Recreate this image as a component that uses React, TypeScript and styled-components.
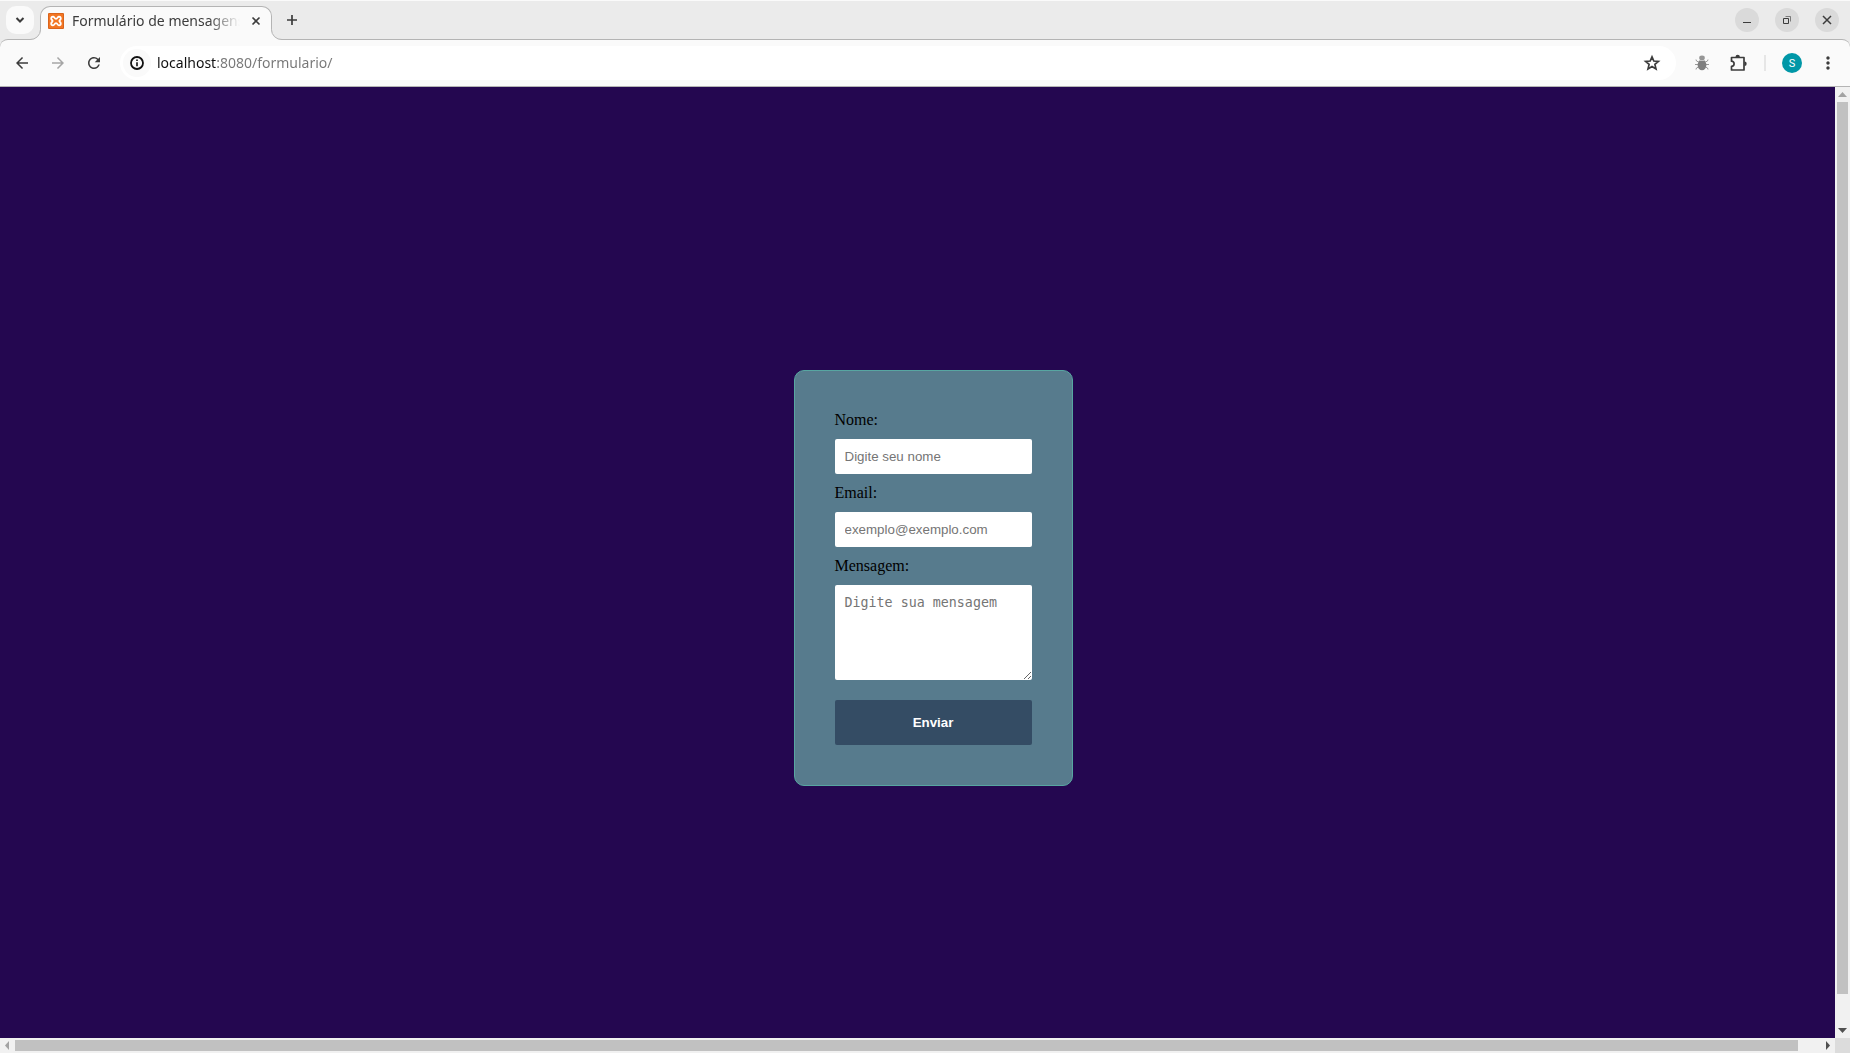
import React from "react";
import styled, { createGlobalStyle } from "styled-components";
import { MdArrowBack, MdArrowForward, MdRefresh, MdMoreVert } from "react-icons/md";

const GlobalStyle = createGlobalStyle`
  * { box-sizing: border-box; }
  body { margin: 0; overflow: hidden; }
`;

const Window = styled.div`
  display: flex;
  flex-direction: column;
  height: 100vh;
  background: #ebebeb;
  font-family: "Noto Sans", sans-serif;
`;

const TabStrip = styled.header`
  display: flex;
  align-items: center;
  height: 39px;
  flex: none;
  padding: 0 11px 0 6px;
  border-top: 1px solid #fafafa;
`;

const ChromeButton = styled.button<{ $size: number; $fill?: string; $radius?: string; $color?: string }>`
  display: flex;
  align-items: center;
  justify-content: center;
  flex: none;
  width: ${(p) => p.$size}px;
  height: ${(p) => p.$size}px;
  padding: 0;
  border: 0;
  border-radius: ${(p) => p.$radius ?? "50%"};
  background: ${(p) => p.$fill ?? "transparent"};
  color: ${(p) => p.$color ?? "#3c3c3c"};
`;

const Tab = styled.div`
  position: relative;
  z-index: 1;
  display: flex;
  align-items: center;
  align-self: flex-end;
  width: 232px;
  height: 34px;
  margin: 0 10px -1px 6px;
  padding: 0 7px 6px;
  border: 1px solid #b4b4b4;
  border-bottom: 0;
  border-radius: 10px 10px 0 0;
  background: #fafafa;
`;

const TabFoot = styled.svg<{ $side: "left" | "right" }>`
  position: absolute;
  bottom: 0;
  ${(p) => p.$side}: -11px;
`;

const TabTitle = styled.span`
  flex: 1;
  margin: 0 8px;
  overflow: hidden;
  white-space: nowrap;
  font-size: 14px;
  line-height: 20px;
  color: #3c3c3c;
  mask-image: linear-gradient(to right, #000 calc(100% - 32px), transparent);
`;

const WindowControls = styled.div`
  display: flex;
  gap: 16px;
  margin-left: auto;
`;

const Toolbar = styled.nav`
  display: flex;
  align-items: center;
  flex: none;
  height: 48px;
  padding: 0 8px;
  border: 1px solid #b4b4b4;
  border-width: 1px 0;
  border-radius: 8px 8px 0 0;
  background: #fafafa;
`;

const NavButtons = styled.div`
  display: flex;
  gap: 8px;
`;

const AddressBar = styled.div`
  display: flex;
  align-items: center;
  flex: 1;
  height: 34px;
  margin: 0 12px;
  padding: 0 10px 0 3px;
  border-radius: 17px;
  background: #fff;
`;

const Address = styled.input`
  flex: 1;
  min-width: 0;
  margin-left: 6px;
  padding: 0;
  border: 0;
  outline: 0;
  font-family: "Noto Sans", sans-serif;
  font-size: 14px;
  line-height: 20px;
  color: transparent;
  background: linear-gradient(to right, #101010 59px, #767676 59px);
  background-clip: text;
`;

const Extensions = styled.div`
  display: flex;
  align-items: center;
  gap: 8px;
`;

const Divider = styled.span`
  width: 2px;
  height: 16px;
  margin: 0 4px;
  background: #e6e6e6;
`;

const Avatar = styled.span`
  display: flex;
  align-items: center;
  justify-content: center;
  width: 20px;
  height: 20px;
  border-radius: 50%;
  background: #0097a7;
  color: #fff;
  font-family: Roboto, sans-serif;
  font-size: 11px;
`;

const Browser = styled.div`
  display: grid;
  grid-template-columns: minmax(0, 1fr) 15px;
  grid-template-rows: minmax(0, 1fr) 15px;
  flex: 1;
  min-height: 0;
  background: #dcdcdc;
`;

const Viewport = styled.div`
  overflow: hidden;
  background: #240750;
`;

const Body = styled.main`
  display: flex;
  align-items: center;
  justify-content: center;
  width: 100vw;
  height: calc(100vh - 87px);
  margin: 8px;
  font-family: "Liberation Serif", serif;
`;

const Form = styled.form`
  display: flex;
  flex-direction: column;
  padding: 40px;
  border: 1px solid #57a6a1;
  border-radius: 10px;
  background: #577b8d;
`;

const Label = styled.label`
  margin-bottom: 10px;
  font-size: 16px;
  line-height: 18px;
  color: #000;
`;

const Field = styled.input`
  width: 197px;
  margin: 0 0 10px;
  padding: 10px;
  border: 0;
  border-radius: 2px;
  outline: 0;
  background: #fff;
  font-family: "Liberation Sans", Arial, sans-serif;
`;

const MessageField = styled(Field)`
  height: 95px;
  margin-bottom: 20px;
  font-family: "DejaVu Sans Mono", monospace;
`;

const SubmitButton = styled.button`
  padding: 15px;
  border: 0;
  border-radius: 2px;
  background: #344c64;
  color: #fff;
  font-family: "Liberation Sans", Arial, sans-serif;
  font-weight: bold;
`;

const Scrollbar = styled.div<{ $vertical?: boolean }>`
  display: flex;
  flex-direction: ${(p) => (p.$vertical ? "column" : "row")};
  background: #f1f1f1;
`;

const Track = styled.div<{ $vertical?: boolean; $rest: number }>`
  flex: 1;
  padding: ${(p) => (p.$vertical ? `0 2px ${p.$rest}px` : `2px ${p.$rest}px 2px 0`)};
`;

const Thumb = styled.div`
  height: 100%;
  background: #c1c1c1;
`;

const arrows = {
  up: "M3 10 L7.5 5 L12 10 Z",
  down: "M3 5 L7.5 10 L12 5 Z",
  left: "M9 3 L5 7.5 L9 12 Z",
  right: "M6 3 L10 7.5 L6 12 Z",
};

function ScrollArrow({ direction, active }: { direction: keyof typeof arrows; active?: boolean }) {
  return (
    <ChromeButton $size={15} $radius="0" $color={active ? "#505050" : "#a3a3a3"} aria-label={`Scroll ${direction}`}>
      <svg width="15" height="15" fill="currentColor">
        <path d={arrows[direction]} />
      </svg>
    </ChromeButton>
  );
}

function Favicon() {
  return (
    <svg width="16" height="16" viewBox="0 0 16 16" aria-hidden="true">
      <rect width="16" height="16" rx="1" fill="#d9641c" />
      <rect x="1" y="1" width="14" height="14" fill="#f37623" />
      <path
        d="M5 3.600C6.600 3.600 6.200 5.800 8 5.800S9.400 3.600 11 3.600A1.900 1.900 0 0 1 12.800 5.500C12.800 7 11.400 7 11.400 8S12.800 9 12.800 10.500A1.900 1.900 0 0 1 11 12.400C9.400 12.400 9.800 10.200 8 10.200S6.600 12.400 5 12.400A1.900 1.900 0 0 1 3.200 10.500C3.200 9 4.600 9 4.600 8S3.200 7 3.200 5.500A1.900 1.900 0 0 1 5 3.600Z"
        fill="none"
        stroke="#fff"
        strokeWidth="1.800"
      />
    </svg>
  );
}

function InfoIcon() {
  return (
    <svg width="16" height="16" viewBox="0 0 16 16" fill="none" stroke="currentColor" aria-hidden="true">
      <circle cx="8" cy="8" r="6" strokeWidth="1.800" />
      <path d="M8 7.200v4M8 4.500v1.600" strokeWidth="1.600" />
    </svg>
  );
}

function StarIcon() {
  return (
    <svg width="18" height="18" viewBox="0 0 18 18" aria-hidden="true">
      <path
        d="M9 2.800 10.800 7 15.400 7.400 11.900 10.400 13 14.900 9 12.500 5 14.900 6.100 10.400 2.600 7.400 7.200 7Z"
        fill="none"
        stroke="currentColor"
        strokeWidth="1.700"
      />
    </svg>
  );
}

function BugIcon() {
  return (
    <svg width="16" height="16" viewBox="0 0 16 16" aria-hidden="true">
      <path
        d="M4.500 7 2.500 6 2 4.500M11.500 7l2-1 .5-1.500M4 9.500H1M12 9.500h3M4.500 12l-2 1-.5 1.500M11.500 12l2 1 .5 1.500"
        fill="none"
        stroke="#9a9a9a"
      />
      <ellipse cx="8" cy="3" rx="2.800" ry="2.400" fill="#969696" />
      <ellipse cx="8" cy="10" rx="4.400" ry="5.200" fill="#7f7f7f" />
      <path d="M5 5.500h6" stroke="#c4c4c4" />
    </svg>
  );
}

function PuzzleIcon() {
  return (
    <svg width="18" height="18" viewBox="0 0 18 18" aria-hidden="true">
      <path
        d="M2.500 3.500h12.500V16H2.500v-3.600a2.600 2.600 0 0 0 0-5.200Z"
        fill="none"
        stroke="currentColor"
        strokeWidth="1.700"
        strokeLinejoin="round"
      />
      <path d="M6.500 3a2.200 2.200 0 0 1 4.400 0ZM15.500 7.600a2.200 2.200 0 0 1 0 4.400Z" fill="currentColor" />
    </svg>
  );
}

export default function App() {
  return (
    <Window>
      <GlobalStyle />
      <TabStrip>
        <ChromeButton $size={28} $fill="#fafafa" $radius="10px" aria-label="Search tabs">
          <svg width="10" height="10" fill="none" stroke="currentColor" strokeWidth="2">
            <path d="M1.500 3 5 6.500 8.500 3" />
          </svg>
        </ChromeButton>
        <Tab>
          <TabFoot $side="left" width="11" height="11" aria-hidden="true">
            <path d="M0 10.500A10 10 0 0 0 10.500 0.500V0H11V11H0Z" fill="#fafafa" />
            <path d="M0 10.500A10 10 0 0 0 10.500 0.500V0" fill="none" stroke="#b4b4b4" />
          </TabFoot>
          <TabFoot $side="right" width="11" height="11" aria-hidden="true">
            <path d="M11 10.500A10 10 0 0 1 0.500 0.500V0H0V11H11Z" fill="#fafafa" />
            <path d="M11 10.500A10 10 0 0 1 0.500 0.500V0" fill="none" stroke="#b4b4b4" />
          </TabFoot>
          <Favicon />
          <TabTitle>Formulário de mensagens</TabTitle>
          <ChromeButton $size={16} aria-label="Close tab">
            <svg width="10" height="10" stroke="currentColor" strokeWidth="1.600">
              <path d="M1.500 1.500l7 7M8.500 1.500l-7 7" />
            </svg>
          </ChromeButton>
        </Tab>
        <ChromeButton $size={20} aria-label="New tab">
          <svg width="12" height="12" stroke="currentColor" strokeWidth="1.700">
            <path d="M6 1v10M1 6h10" />
          </svg>
        </ChromeButton>
        <WindowControls>
          <ChromeButton $size={24} $fill="#dadada" aria-label="Minimize">
            <svg width="10" height="10" stroke="currentColor">
              <path d="M1 7.500h8" />
            </svg>
          </ChromeButton>
          <ChromeButton $size={24} $fill="#dadada" aria-label="Restore">
            <svg width="10" height="10" fill="none" stroke="currentColor">
              <path d="M1.500 3.500h5v5h-5z" />
              <path d="M3.500 1.500h5v5" opacity=".6" />
            </svg>
          </ChromeButton>
          <ChromeButton $size={24} $fill="#dadada" aria-label="Close window">
            <svg width="10" height="10" stroke="currentColor" strokeWidth="1.500">
              <path d="M1 1l8 8M9 1l-8 8" />
            </svg>
          </ChromeButton>
        </WindowControls>
      </TabStrip>

      <Toolbar>
        <NavButtons>
          <ChromeButton $size={28} aria-label="Back"><MdArrowBack size={18} /></ChromeButton>
          <ChromeButton $size={28} $color="#a6a6a6" aria-label="Forward"><MdArrowForward size={18} /></ChromeButton>
          <ChromeButton $size={28} aria-label="Reload"><MdRefresh size={18} /></ChromeButton>
        </NavButtons>
        <AddressBar>
          <ChromeButton $size={28} $fill="#fafafa" $color="#101010" aria-label="Site information">
            <InfoIcon />
          </ChromeButton>
          <Address aria-label="Address" defaultValue="localhost:8080/formulario/" spellCheck={false} />
          <ChromeButton $size={28} aria-label="Bookmark this page"><StarIcon /></ChromeButton>
        </AddressBar>
        <Extensions>
          <ChromeButton $size={28} aria-label="Debug extension"><BugIcon /></ChromeButton>
          <ChromeButton $size={28} aria-label="Extensions"><PuzzleIcon /></ChromeButton>
          <Divider />
          <ChromeButton $size={28} aria-label="Profile"><Avatar>S</Avatar></ChromeButton>
          <ChromeButton $size={28} aria-label="Menu"><MdMoreVert size={20} /></ChromeButton>
        </Extensions>
      </Toolbar>

      <Browser>
        <Viewport>
          <Body>
            <Form onSubmit={(e) => e.preventDefault()}>
              <Label htmlFor="nome">Nome:</Label>
              <Field id="nome" type="text" placeholder="Digite seu nome" />
              <Label htmlFor="email">Email:</Label>
              <Field id="email" type="email" placeholder="exemplo@exemplo.com" />
              <Label htmlFor="mensagem">Mensagem:</Label>
              <MessageField as="textarea" id="mensagem" placeholder="Digite sua mensagem" />
              <SubmitButton type="submit">Enviar</SubmitButton>
            </Form>
          </Body>
        </Viewport>
        <Scrollbar $vertical>
          <ScrollArrow direction="up" />
          <Track $vertical $rest={29}><Thumb /></Track>
          <ScrollArrow direction="down" active />
        </Scrollbar>
        <Scrollbar>
          <ScrollArrow direction="left" />
          <Track $rest={22}><Thumb /></Track>
          <ScrollArrow direction="right" active />
        </Scrollbar>
      </Browser>
    </Window>
  );
}
